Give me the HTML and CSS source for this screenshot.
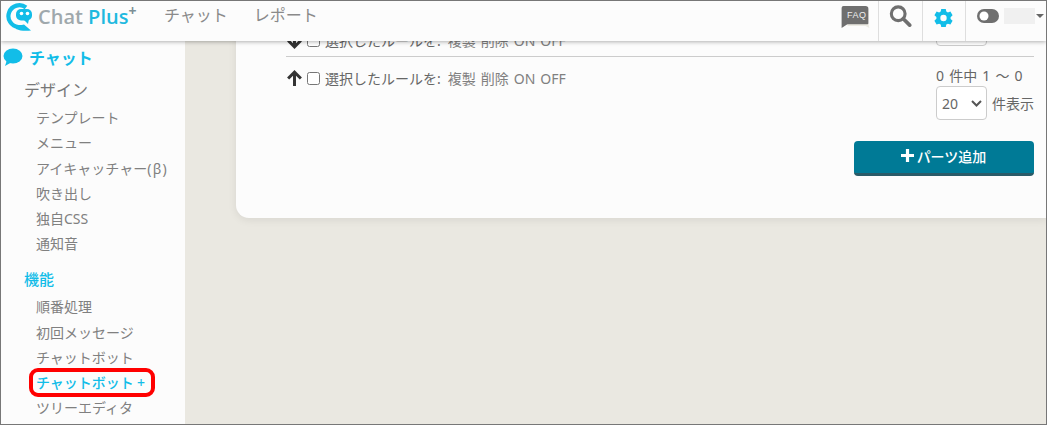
FILE: index.html
```html
<!DOCTYPE html>
<html lang="ja">
<head>
<meta charset="utf-8">
<title>Chat Plus</title>
<link rel="stylesheet" href="styles.css">
</head>
<body>
<div class="frame">
  <header class="topbar">
    <div class="logo">
      <svg class="logo-mark" width="29" height="28" viewBox="0 0 29 28">
        <path fill="none" stroke="#12bde8" stroke-width="4.200" d="M21 4.500A10.900 10.900 0 1 0 13.500 24"/>
        <path fill="#12bde8" d="M11 22c3 .2 6 .2 8-.5l7 6c-5 .5-11 .5-15-1.500z"/>
        <rect fill="#12bde8" x="11" y="6" width="16" height="11.500" rx="5"/>
        <path fill="#12bde8" d="M18 16h6l-1 5z"/>
        <circle fill="#fff" cx="16.500" cy="10.500" r="1.800"/>
        <circle fill="#fff" cx="22.500" cy="10.500" r="1.800"/>
      </svg>
      <span class="logo-text"><span class="logo-chat">Chat</span> <span class="logo-plus">Plus<sup>+</sup></span></span>
    </div>
    <nav class="topnav">
      <a>チャット</a>
      <a>レポート</a>
    </nav>
    <div class="tools">
      <div class="tool tool-faq">
        <svg width="30" height="22" viewBox="0 0 30 23">
          <path fill="#ecebe4" d="M4 18h25l1 5-4-2H8z"/>
          <path fill="#6f6f6f" d="M3 0h23a3 3 0 0 1 3 3v15a1 1 0 0 1-1 1H7l-6 4V2a2 2 0 0 1 2-2z"/>
        </svg>
        <span class="faq-label">FAQ</span>
      </div>
      <div class="tool tool-search">
        <svg width="23" height="22" viewBox="0 0 24 24">
          <circle cx="9.500" cy="9.500" r="7.500" fill="none" stroke="#6f6f6f" stroke-width="3.400"/>
          <path d="M15 15l7 7" stroke="#6f6f6f" stroke-width="4" stroke-linecap="round"/>
        </svg>
      </div>
      <div class="tool tool-gear">
        <svg width="21" height="20" viewBox="0 0 22 22">
          <path fill="#12bde8" fill-rule="evenodd" d="M8.500 1h5l.6 2.900 1.700 1 2.800-1 2.400 4.200-2.200 2 0 1.900 2.200 2-2.400 4.200-2.800-1-1.700 1-.6 2.800h-5l-.6-2.800-1.700-1-2.800 1L1 13.900l2.200-2v-1.900L1 8.100l2.400-4.200 2.800 1 1.700-1zM11 7.500a3.500 3.500 0 1 0 0 7 3.500 3.500 0 0 0 0-7z"/>
        </svg>
      </div>
      <div class="tool-user">
        <svg width="22" height="14" viewBox="0 0 22 14">
          <rect width="22" height="14" rx="7" fill="#6f6f6f"/>
          <circle cx="7" cy="7" r="4.500" fill="#fff"/>
        </svg>
        <span class="user-name"></span>
        <span class="caret"></span>
      </div>
    </div>
  </header>
  <div class="body">
    <aside class="sidebar">
      <div class="side-title">
        <svg width="20" height="18" viewBox="0 0 20 18">
          <ellipse cx="10" cy="8" rx="9.500" ry="7.500" fill="#12bde8"/>
          <path fill="#12bde8" d="M4 12L2 18l7-4z"/>
        </svg>
        <span>チャット</span>
      </div>
      <div class="side-group">デザイン</div>
      <ul class="side-list">
        <li>テンプレート</li>
        <li>メニュー</li>
        <li>アイキャッチャー<span class="beta">(β)</span></li>
        <li>吹き出し</li>
        <li>独自CSS</li>
        <li>通知音</li>
      </ul>
      <div class="side-group side-group-active">機能</div>
      <ul class="side-list side-list-second">
        <li>順番処理</li>
        <li>初回メッセージ</li>
        <li>チャットボット</li>
        <li class="current">チャットボット<span class="plus-mark">+</span></li>
        <li>ツリーエディタ</li>
      </ul>
    </aside>
    <main class="main">
      <section class="card">
        <div class="rule-row rule-row-top">
          <div class="rule-left">
            <svg class="arrow" width="17" height="17" viewBox="0 0 16 16"><path d="M8 15V2M2 8l6-6 6 6" fill="none" stroke="#333" stroke-width="2.800" transform="rotate(180 8 8)"/></svg>
            <input type="checkbox" class="check">
            <span class="lead">選択したルールを:</span>
            <span class="actions">複製</span>
            <span class="actions">削除</span>
            <span class="actions">ON</span>
            <span class="actions">OFF</span>
          </div>
          <div class="select-stub"></div>
        </div>
        <div class="rule-row">
          <div class="rule-left">
            <svg class="arrow" width="17" height="17" viewBox="0 0 16 16"><path d="M8 15V2M2 8l6-6 6 6" fill="none" stroke="#333" stroke-width="2.800"/></svg>
            <input type="checkbox" class="check">
            <span class="lead">選択したルールを:</span>
            <span class="actions">複製</span>
            <span class="actions">削除</span>
            <span class="actions">ON</span>
            <span class="actions">OFF</span>
          </div>
          <div class="pager">
            <div class="pager-count">0 件中 1 ～ 0</div>
            <div class="pager-size">
              <div class="select"><span>20</span><svg width="11" height="7" viewBox="0 0 11 7"><path d="M1 1l4.500 4.500L10 1" fill="none" stroke="#555" stroke-width="2"/></svg></div>
              <span>件表示</span>
            </div>
          </div>
        </div>
        <div class="card-actions">
          <button class="add-btn" type="button"><svg width="13" height="13" viewBox="0 0 13 13"><path d="M6.500 0v13M0 6.500h13" stroke="#fff" stroke-width="3.200"/></svg>パーツ追加</button>
        </div>
      </section>
    </main>
  </div>
</div>
</body>
</html>
```
FILE: styles.css
```css
* { box-sizing: border-box; }
html, body { margin: 0; padding: 0; height: 100%; overflow: hidden; }
body { font-family: "Noto Sans", "Noto Sans CJK JP", sans-serif; color: #666; background: #eae8e1; }
.frame { width: 1047px; height: 425px; border: 1px solid #777; display: flex; flex-direction: column; overflow: hidden; position: relative; }

.topbar { height: 40px; flex: none; background: #fcfcfc; display: flex; align-items: flex-start; box-shadow: 0 1px 4px rgba(0,0,0,.3); position: relative; z-index: 2; }
.logo { display: flex; align-items: center; margin: 2px 0 0 4px; width: 159px; }
.logo-mark { flex: none; }
.logo-text { font-family: "Open Sans", sans-serif; font-weight: 600; font-size: 20px; line-height: 26px; margin-left: 4px; white-space: nowrap; }
.logo-chat { color: #9fa8ac; }
.logo-plus { color: #1fb9df; }
.logo-plus sup { font-size: 14px; font-weight: 700; line-height: 0; vertical-align: 8px; color: #7c8f96; }
.topnav { display: flex; gap: 26px; font-size: 16px; line-height: 24px; margin-top: 2px; color: #8a8a8a; }
.tools { margin-left: auto; display: flex; align-items: stretch; height: 100%; }
.tool { width: 43.500px; display: flex; align-items: flex-start; justify-content: center; border-right: 1px solid #dedede; position: relative; }
.tool-faq { width: 39px; justify-content: flex-start; padding-top: 5px; }
.faq-label { position: absolute; left: 7px; top: 8px; font-family: "Liberation Sans", sans-serif; font-size: 9px; line-height: 12px; letter-spacing: .5px; color: #eee; }
.tool-search { padding-top: 4px; }
.tool-gear { padding-top: 7px; }
.tool-user { width: 80px; display: flex; align-items: center; height: 30px; padding-left: 11px; }
.user-name { width: 31px; height: 16px; background: #f0f0f0; margin-left: 5px; }
.caret { width: 0; height: 0; border-left: 4px solid transparent; border-right: 4px solid transparent; border-top: 4px solid #666; margin-left: 1px; }

.body { flex: 1; min-height: 0; display: flex; }
.sidebar { width: 184px; flex: none; background: #fcfcfc; padding-top: 4px; }
.side-title { display: flex; align-items: center; height: 24px; font-size: 16px; font-weight: 700; color: #12bde8; padding-left: 2px; gap: 6px; }
.side-group { font-size: 16px; line-height: 24px; margin-top: 9px; padding-left: 23px; color: #777; }
.side-group-active { color: #12bde8; font-weight: 500; font-size: 15px; margin-top: 10px; }
.side-list { list-style: none; margin: 3px 0 0; padding: 0 0 0 35px; font-size: 14px; line-height: 25.300px; color: #808080; }
.side-list-second { margin-top: 3.500px; }
.side-list li { position: relative; white-space: nowrap; }
.beta { letter-spacing: 1.300px; }
.current { color: #12bde8; font-weight: 500; }
.plus-mark { margin-left: 3px; }
.current::after { content: ""; box-sizing: border-box; position: absolute; left: -7px; top: -2px; width: 126px; height: 29px; border: 4px solid #f00; border-radius: 9px; }

.main { flex: 1; min-width: 0; overflow: hidden; padding-left: 51px; }
.card { background: #fcfcfc; width: 811px; height: 206px; margin-top: -29px; border-radius: 0 0 0 13px; padding: 20px 13px 0 50px; box-shadow: 0 2px 8px rgba(0,0,0,.08); font-size: 14px; color: #666; position: relative; }
.rule-row { display: flex; justify-content: space-between; }
.rule-row-top { height: 25px; border-bottom: 1px solid #ccc; position: relative; }
.rule-row-top .rule-left { margin-top: -2px; }
.select-stub { position: absolute; right: 47px; top: -20px; width: 51px; height: 34px; border: 1px solid #ccc; border-radius: 4px; background: #fff; }
.rule-left { display: flex; align-items: center; gap: 5px; height: 20px; margin-top: 11px; white-space: nowrap; }
.arrow { flex: none; }
.check { width: 13px; height: 13px; margin: 0 0 0 -1px; flex: none; }
.lead { margin-right: 2px; }
.actions { color: #808080; }
.pager { width: 98px; margin-top: 9px; }
.pager-count { line-height: 20px; white-space: nowrap; word-spacing: 1.500px; }
.pager-size { display: flex; align-items: center; gap: 5px; white-space: nowrap; }
.select { width: 51px; height: 34px; flex: none; border: 1px solid #ccc; border-radius: 4px; background: #fff; display: flex; align-items: center; justify-content: space-between; padding: 0 4px 0 5px; }
.card-actions { display: flex; justify-content: flex-end; margin-top: 21px; }
.add-btn { width: 180px; height: 35px; background: #007a96; border: 0; border-bottom: 3px solid #2a5b68; border-radius: 4px; color: #fff; font: 500 14px "Noto Sans CJK JP", sans-serif; display: flex; align-items: center; justify-content: center; gap: 3px; padding: 0 1px 3px 0; }
```
